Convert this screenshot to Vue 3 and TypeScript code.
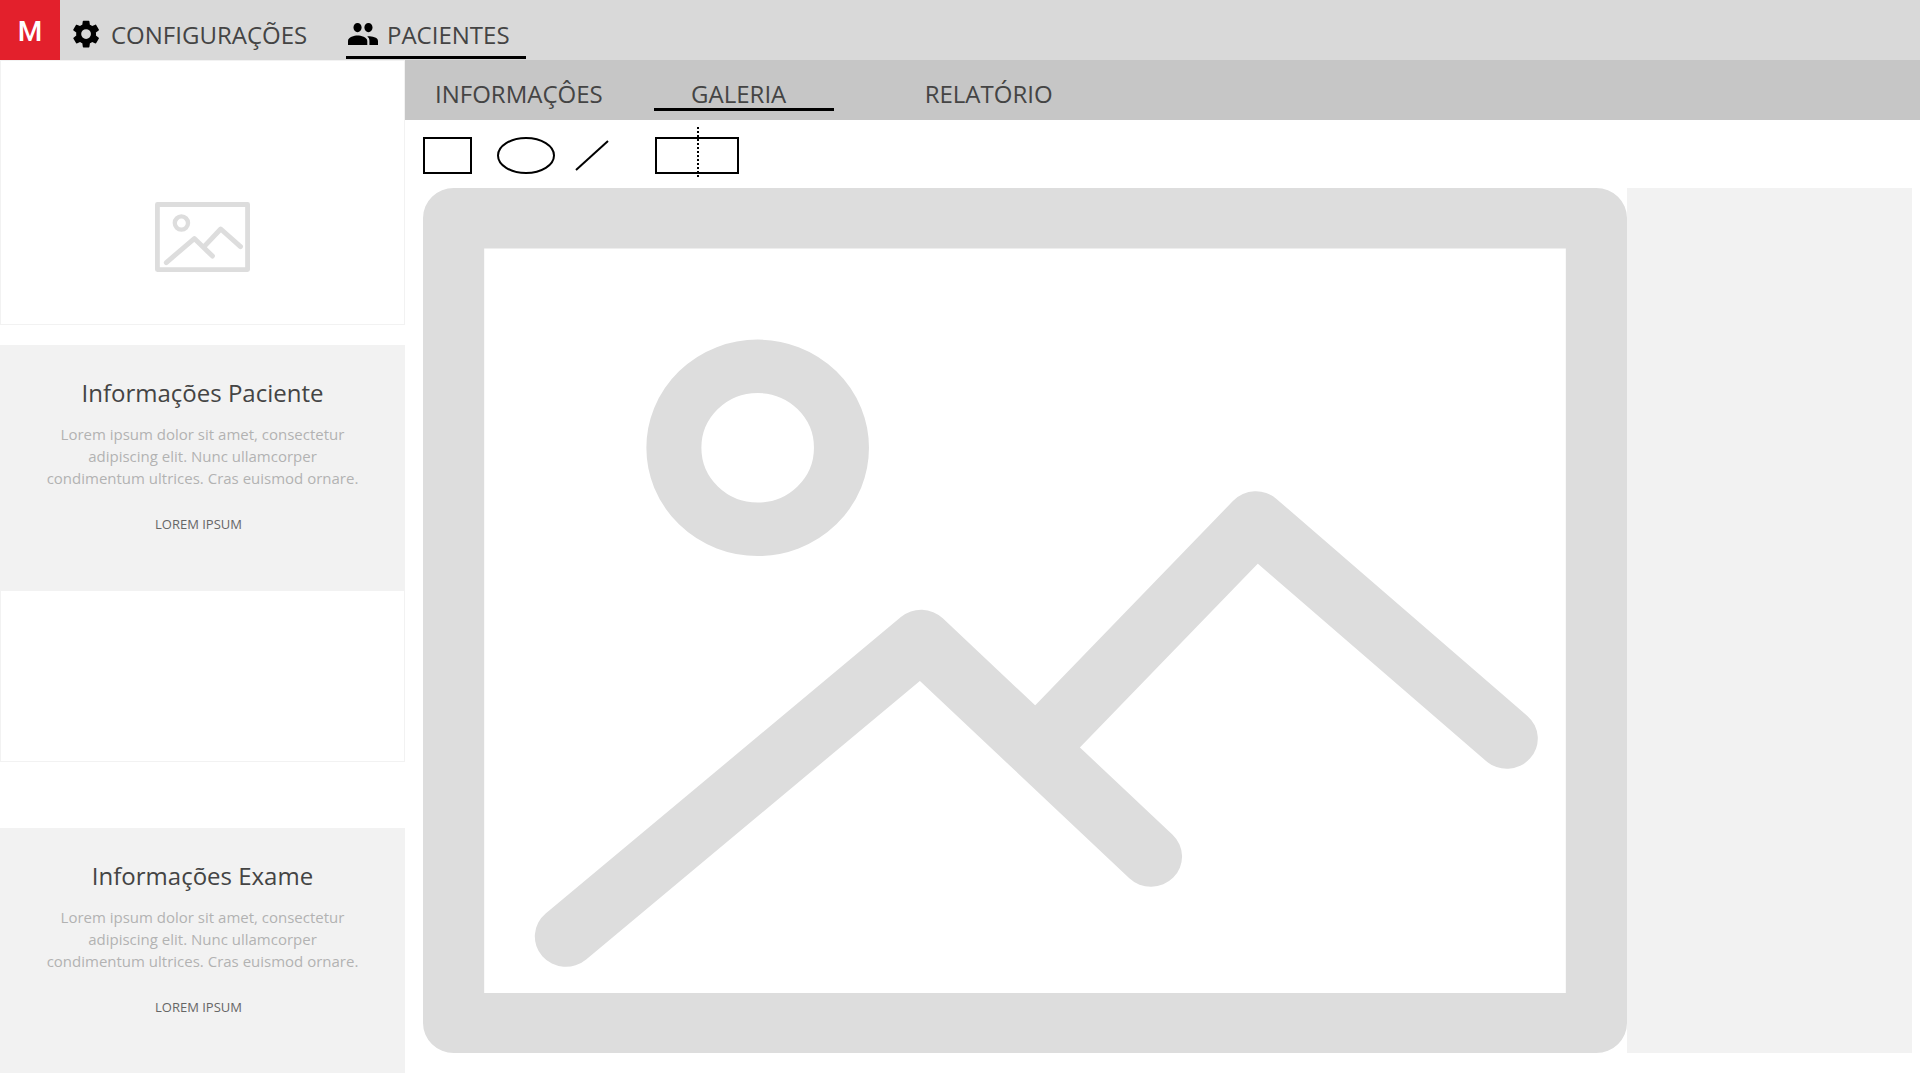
<script setup lang="ts">
interface Tool {
  id: string
  label: string
}

interface Section {
  title: string
  text: string
  action: string
}

const mainNav = [
  { id: 'config', label: 'CONFIGURAÇÕES', active: false },
  { id: 'pacientes', label: 'PACIENTES', active: true },
]

const tabs = [
  { label: 'INFORMAÇÔES', active: false },
  { label: 'GALERIA', active: true },
  { label: 'RELATÓRIO', active: false },
]

const tools: Tool[] = [
  { id: 'rect', label: 'Retângulo' },
  { id: 'ellipse', label: 'Elipse' },
  { id: 'line', label: 'Linha' },
  { id: 'split', label: 'Dividir' },
]

const lorem =
  'Lorem ipsum dolor sit amet, consectetur adipiscing elit. Nunc ullamcorper condimentum ultrices. Cras euismod ornare.'

const patient: Section = { title: 'Informações Paciente', text: lorem, action: 'LOREM IPSUM' }
const exam: Section = { title: 'Informações Exame', text: lorem, action: 'LOREM IPSUM' }
</script>

<template>
  <div class="app">
    <svg class="defs" aria-hidden="true">
      <symbol id="picture" viewBox="0 0 1171 865" preserveAspectRatio="none">
        <path
          fill="#ddd"
          fill-rule="evenodd"
          d="M30 0H1141A30 30 0 0 1 1171 30V835A30 30 0 0 1 1141 865H30A30 30 0 0 1 0 835V30A30 30 0 0 1 30 0ZM59.500 60.500V805H1111.500V60.500Z"
        />
        <g fill="none" stroke="#ddd">
          <circle cx="325.5" cy="259.8" r="81.5" stroke-width="53.500" />
          <path
            stroke-width="60.500"
            stroke-linecap="round"
            stroke-linejoin="round"
            d="M139 748.500L484.500 452L708 668.500M602 554.600L810 333.500L1054 550.500"
          />
        </g>
      </symbol>
    </svg>

    <header class="topbar">
      <a class="logo" href="#">M</a>
      <nav class="main-nav">
        <a v-for="item in mainNav" :key="item.id" href="#" :class="['nav-item', item.id, { active: item.active }]">
          <svg v-if="item.id === 'config'" class="icon" viewBox="48 48 416 416" aria-hidden="true">
            <path
              d="M416.349 256.046c0-7.990-.664-15.984-1.993-23.314l44.507-34.637c3.983-3.330 5.312-9.324 2.656-13.988l-42.513-73.271c-2.656-4.664-7.970-6.662-12.619-4.664l-52.478 21.315c-10.628-7.993-23.248-15.321-35.870-20.650l-7.970-55.953C309.405 46.554 304.756 43 299.442 43h-84.363c-5.314 0-9.963 3.554-10.628 8.884l-7.970 55.953c-13.285 5.329-25.242 12.657-35.870 20.650l-52.478-21.315c-4.649-1.332-9.963 0-12.620 4.664l-42.514 73.271c-2.656 4.664-1.328 10.658 2.657 13.988l44.506 34.637c-.664 7.330-1.328 15.324-1.328 23.314 0 7.327.664 15.321 1.992 22.651l-44.506 34.637c-3.985 3.330-5.313 9.324-2.657 13.988l42.514 73.271c2.657 4.664 7.971 6.662 12.620 4.664l52.478-21.315c10.628 7.993 23.249 15.321 35.870 20.650l7.970 55.953c.665 5.330 5.314 8.884 10.628 8.884h84.363c5.314 0 9.963-3.554 10.628-8.884l7.970-55.953c13.286-5.329 25.242-12.657 35.870-20.650l52.478 21.315c4.649 1.332 9.963 0 12.619-4.664l42.513-73.271c2.656-4.664 1.328-10.658-2.656-13.988l-44.507-34.637c1.329-7.330 1.329-15.324 1.329-22.651zM257 334a78 78 0 1 1 0-156 78 78 0 0 1 0 156z"
            />
          </svg>
          <svg v-else class="icon people-icon" viewBox="32 112 448 288" preserveAspectRatio="none" aria-hidden="true">
            <path
              d="M337.454 232c33.599 0 61.092-27.002 61.092-60 0-32.997-27.493-60-61.092-60s-61.090 27.003-61.090 60c0 32.998 27.491 60 61.090 60zm-162.908 0c33.599 0 61.090-27.002 61.090-60 0-32.997-27.491-60-61.090-60s-61.092 27.003-61.092 60c0 32.998 27.493 60 61.092 60zm0 44C126.688 276 32 298.998 32 346v54h288v-54c0-47.002-97.599-70-145.454-70zm162.908 11.003c-6.105 0-10.325 0-17.454.997 23.426 17.002 32 28 32 58v54h128v-54c0-47.002-94.688-58.997-142.546-58.997z"
            />
          </svg>
          <span>{{ item.label }}</span>
        </a>
      </nav>
    </header>

    <div class="body">
      <aside class="sidebar">
        <div class="box photo">
          <svg class="thumb" role="img" aria-label="Foto do paciente"><use href="#picture" /></svg>
        </div>
        <section class="panel">
          <h2>{{ patient.title }}</h2>
          <p>{{ patient.text }}</p>
          <a href="#">{{ patient.action }}</a>
        </section>
        <div class="box blank"></div>
        <section class="panel exam">
          <h2>{{ exam.title }}</h2>
          <p>{{ exam.text }}</p>
          <a href="#">{{ exam.action }}</a>
        </section>
      </aside>

      <main class="content">
        <nav class="tabs">
          <a v-for="tab in tabs" :key="tab.label" href="#" :class="['tab', { active: tab.active }]">{{ tab.label }}</a>
        </nav>

        <div class="tools">
          <button v-for="tool in tools" :key="tool.id" type="button" :class="['tool', tool.id]" :aria-label="tool.label">
            <svg v-if="tool.id === 'rect'" width="49" height="37">
              <rect x="1" y="1" width="47" height="35" />
            </svg>
            <svg v-else-if="tool.id === 'ellipse'" width="58" height="37">
              <ellipse cx="29" cy="18.500" rx="28" ry="17.500" />
            </svg>
            <svg v-else-if="tool.id === 'line'" width="34" height="31">
              <path d="M1 30L33 1" />
            </svg>
            <svg v-else width="84" height="57">
              <rect x="1" y="11" width="82" height="35" />
              <path d="M43 0V52" stroke-dasharray="2 2" />
            </svg>
          </button>
        </div>

        <div class="workspace">
          <svg class="canvas" role="img" aria-label="Imagem do exame"><use href="#picture" /></svg>
          <aside class="details"></aside>
        </div>
      </main>
    </div>
  </div>
</template>

<style>
body {
  margin: 0;
  background: #fff;
}
</style>

<style scoped>
.app {
  font-family: 'Open Sans', 'Noto Sans', sans-serif;
  color: #444;
}
.app * {
  box-sizing: border-box;
}
a {
  color: inherit;
  text-decoration: none;
}
.defs {
  position: absolute;
  width: 0;
  height: 0;
}
.topbar {
  display: flex;
  height: 60px;
  background: #d9d9d9;
}
.logo {
  width: 60px;
  padding-top: 2px;
  background: #e3202c;
  color: #fff;
  font: 500 28px/60px Roboto, sans-serif;
  text-align: center;
}
.main-nav {
  display: flex;
  gap: 27px;
  padding-left: 13px;
}
.nav-item {
  display: flex;
  gap: 12px;
  height: 59px;
  padding-top: 10px;
  font-size: 24px;
  line-height: 50px;
  border-bottom: 3px solid transparent;
}
.config {
  width: 246px;
}
.pacientes {
  width: 180px;
  gap: 9px;
  padding-left: 2px;
}
.nav-item.active {
  border-color: #000;
}
.icon {
  width: 26px;
  height: 26px;
  margin-top: 11px;
  overflow: visible;
}
.people-icon {
  width: 30px;
  height: 22px;
  margin-top: 13px;
}
.body {
  display: flex;
  align-items: flex-start;
}
.sidebar {
  flex: 0 0 405px;
}
.box {
  border: 1px solid #f2f2f2;
}
.photo {
  height: 265px;
  margin-bottom: 20px;
  padding: 141px 154px 0;
}
.thumb {
  display: block;
  width: 95px;
  height: 70px;
}
.blank {
  height: 172px;
  margin-bottom: 66px;
}
.panel {
  height: 245px;
  padding: 32px 40px 0;
  background: #f2f2f2;
  text-align: center;
}
h2 {
  margin: 0;
  font-size: 24px;
  font-weight: 400;
  line-height: 32px;
}
.panel p {
  margin: 14px 0 24px;
  color: #b2b2b2;
  font-size: 15px;
  line-height: 22px;
}
.panel a {
  display: block;
  padding-right: 8px;
  color: #666;
  font-size: 13px;
  line-height: 22px;
}
.content {
  flex: 1;
  min-width: 0;
}
.tabs {
  display: flex;
  height: 60px;
  padding-left: 30px;
  background: #c6c6c6;
}
.tab {
  height: 51px;
  padding-top: 19px;
  font-size: 24px;
  line-height: 30px;
  border-bottom: 3px solid transparent;
}
.tab.active {
  width: 180px;
  margin: 0 91px 0 51px;
  padding-right: 10px;
  border-color: #000;
  text-align: center;
}
.tools {
  display: flex;
  align-items: center;
  height: 68px;
  padding: 3px 0 0 18px;
}
.tool {
  padding: 0;
  border: 0;
  background: none;
}
.tool.ellipse {
  margin: 0 20px 0 25px;
}
.tool.split {
  margin-left: 46px;
}
.tool svg {
  display: block;
  fill: none;
  stroke: #000;
  stroke-width: 2;
}
.workspace {
  display: flex;
  padding: 0 8px 0 18px;
}
.canvas {
  flex: 1;
  min-width: 0;
  aspect-ratio: 1204 / 865;
}
.details {
  flex: 0 0 285px;
  background: #f2f2f2;
}
</style>
